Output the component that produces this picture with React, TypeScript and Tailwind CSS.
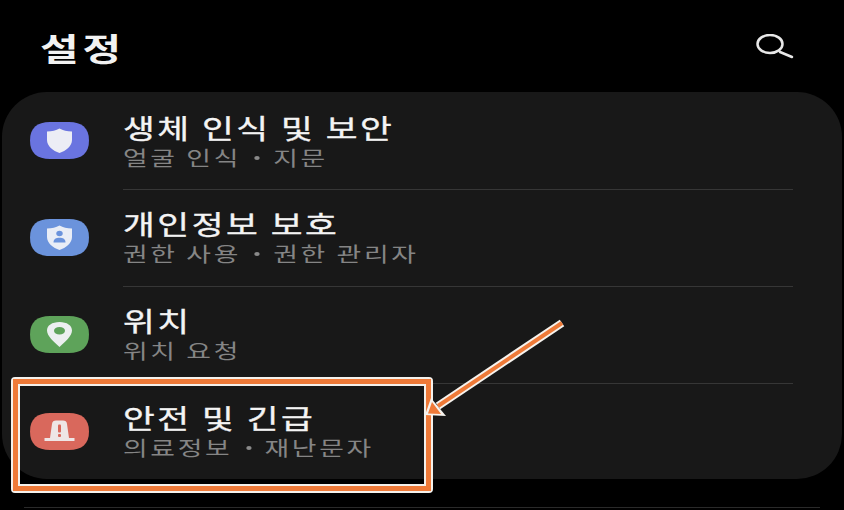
import React from "react";

function Squircle({ color, children }: { color: string; children: React.ReactNode }) {
  return (
    <svg width="59" height="37" viewBox="0 0 59 37" className="shrink-0">
      <path d="M20 0H39C52 0 59 6 59 18.500C59 31 52 37 39 37H20C7 37 0 31 0 18.500C0 6 7 0 20 0Z" fill={color} />
      {children}
    </svg>
  );
}

const shield = "M29.500 6.500C33 8.500 37 9.200 42 9.500V18C42 24 36 29 29.500 31C23 29 17 24 17 18V9.500C22 9.200 26 8.500 29.500 6.500Z";

const rows = [
  {
    title: "생체 인식 및 보안",
    sub: ["얼굴 인식", "지문"],
    icon: (
      <Squircle color="#6a74e0">
        <path d={shield} fill="#ecedf5" />
      </Squircle>
    ),
  },
  {
    title: "개인정보 보호",
    sub: ["권한 사용", "권한 관리자"],
    icon: (
      <Squircle color="#6b93dc">
        <path d={shield} fill="#e9edf6" />
        <ellipse cx="29.500" cy="14.500" rx="3.200" ry="2.800" fill="#6b93dc" />
        <path d="M23.500 23.500C23.500 20 26 18.800 29.500 18.800C33 18.800 35.500 20 35.500 23.500Z" fill="#6b93dc" />
      </Squircle>
    ),
  },
  {
    title: "위치",
    sub: ["위치 요청"],
    icon: (
      <Squircle color="#5ea35a">
        <path d="M29.500 6C37 6 42 9.500 42 14.500C42 20 35 26 29.500 31C24 26 17 20 17 14.500C17 9.500 22 6 29.500 6Z" fill="#eceff0" />
        <ellipse cx="29.500" cy="14.800" rx="5.500" ry="3.800" fill="#5ea35a" />
      </Squircle>
    ),
  },
  {
    title: "안전 및 긴급",
    sub: ["의료정보", "재난문자"],
    icon: (
      <Squircle color="#d9685c">
        <path d="M22 11C22 8.500 24 7.500 26 7.500H33C35 7.500 37 8.500 37 11L39 25H44.500V28H14.500V25H20Z" fill="#eee6e6" />
        <rect x="28" y="11.500" width="3" height="8" rx="1" fill="#d9685c" />
        <rect x="28" y="21" width="3" height="3" rx="1" fill="#d9685c" />
      </Squircle>
    ),
  },
];

export default function App() {
  return (
    <div className="relative h-[510px] w-[844px] overflow-hidden bg-black font-['Noto_Sans_CJK_KR','Noto_Sans',sans-serif]">
      <header className="flex h-[92px] items-start justify-between pl-[40px] pr-[50px]">
        {/* the reference is stretched sideways, hence the scale-x on text */}
        <h1 className="mt-[23px] origin-left scale-x-[1.31] text-[32px] font-bold leading-[48px] tracking-[3px] text-[#f2f2f2]">설정</h1>
        <svg width="38" height="26" viewBox="0 0 38 26" className="mt-[34px]" fill="none" stroke="#e8e8e8" strokeWidth="2.500" strokeLinecap="round">
          <ellipse cx="14" cy="10" rx="12.500" ry="9" />
          <path d="M24 18L36 23" />
        </svg>
      </header>

      <main className="mx-[2px] flex h-[387px] flex-col rounded-[45px] bg-[#181818]">
        {rows.map((row, i) => (
          <div key={row.title} className={`flex items-start pl-[28px] pr-[49px] ${i === 0 ? "h-[98px]" : i === 3 ? "h-[95px]" : "h-[97px]"}`}>
            <div className={i === 0 ? "mt-[30px]" : "mt-[29px]"}>{row.icon}</div>
            <div className={`ml-[34px] flex h-full flex-1 flex-col ${i < 3 ? "border-b border-[#363636]" : ""} ${i === 0 ? "pt-[16px]" : "pt-[14px]"}`}>
              <div className="origin-left scale-x-[1.28] whitespace-nowrap text-[27px] font-normal leading-[39px] tracking-[2px] text-[#f4f4f4] [-webkit-text-stroke:0.35px_#f4f4f4]">{row.title}</div>
              <div className="flex origin-left scale-x-[1.34] items-center whitespace-nowrap text-[20px] leading-[22px] tracking-[2px] text-[#858585]">
                {row.sub.map((s, j) => (
                  <React.Fragment key={s}>
                    {j > 0 && <span className="mx-[10px] h-[4px] w-[4px] rounded-full bg-[#8a8a8a]" />}
                    <span>{s}</span>
                  </React.Fragment>
                ))}
              </div>
            </div>
          </div>
        ))}
      </main>

      <div className="mx-[24px] mt-[28px] h-px bg-[#2a2a2a]" />

      {/* orange callout box */}
      <div className="absolute left-[11px] top-[377px] h-[116px] w-[422px] rounded-[4px] border-2 border-[#f4f1ec] bg-transparent">
        <div className="h-full w-full border-[5px] border-[#ef7a38]">
          <div className="h-full w-full border-2 border-[#f4f1ec]" />
        </div>
      </div>

      {/* arrow */}
      <svg className="absolute left-0 top-0" width="844" height="510" viewBox="0 0 844 510" fill="none">
        <path d="M562 323L438 406" stroke="#f6f3ee" strokeWidth="8" />
        <path d="M431 398L446 416L425 415Z" fill="#f6f3ee" />
        <path d="M562 323L438 406" stroke="#ef7a38" strokeWidth="4" />
        <path d="M432 402L441 414L428 413.500Z" fill="#ef7a38" />
      </svg>
    </div>
  );
}
